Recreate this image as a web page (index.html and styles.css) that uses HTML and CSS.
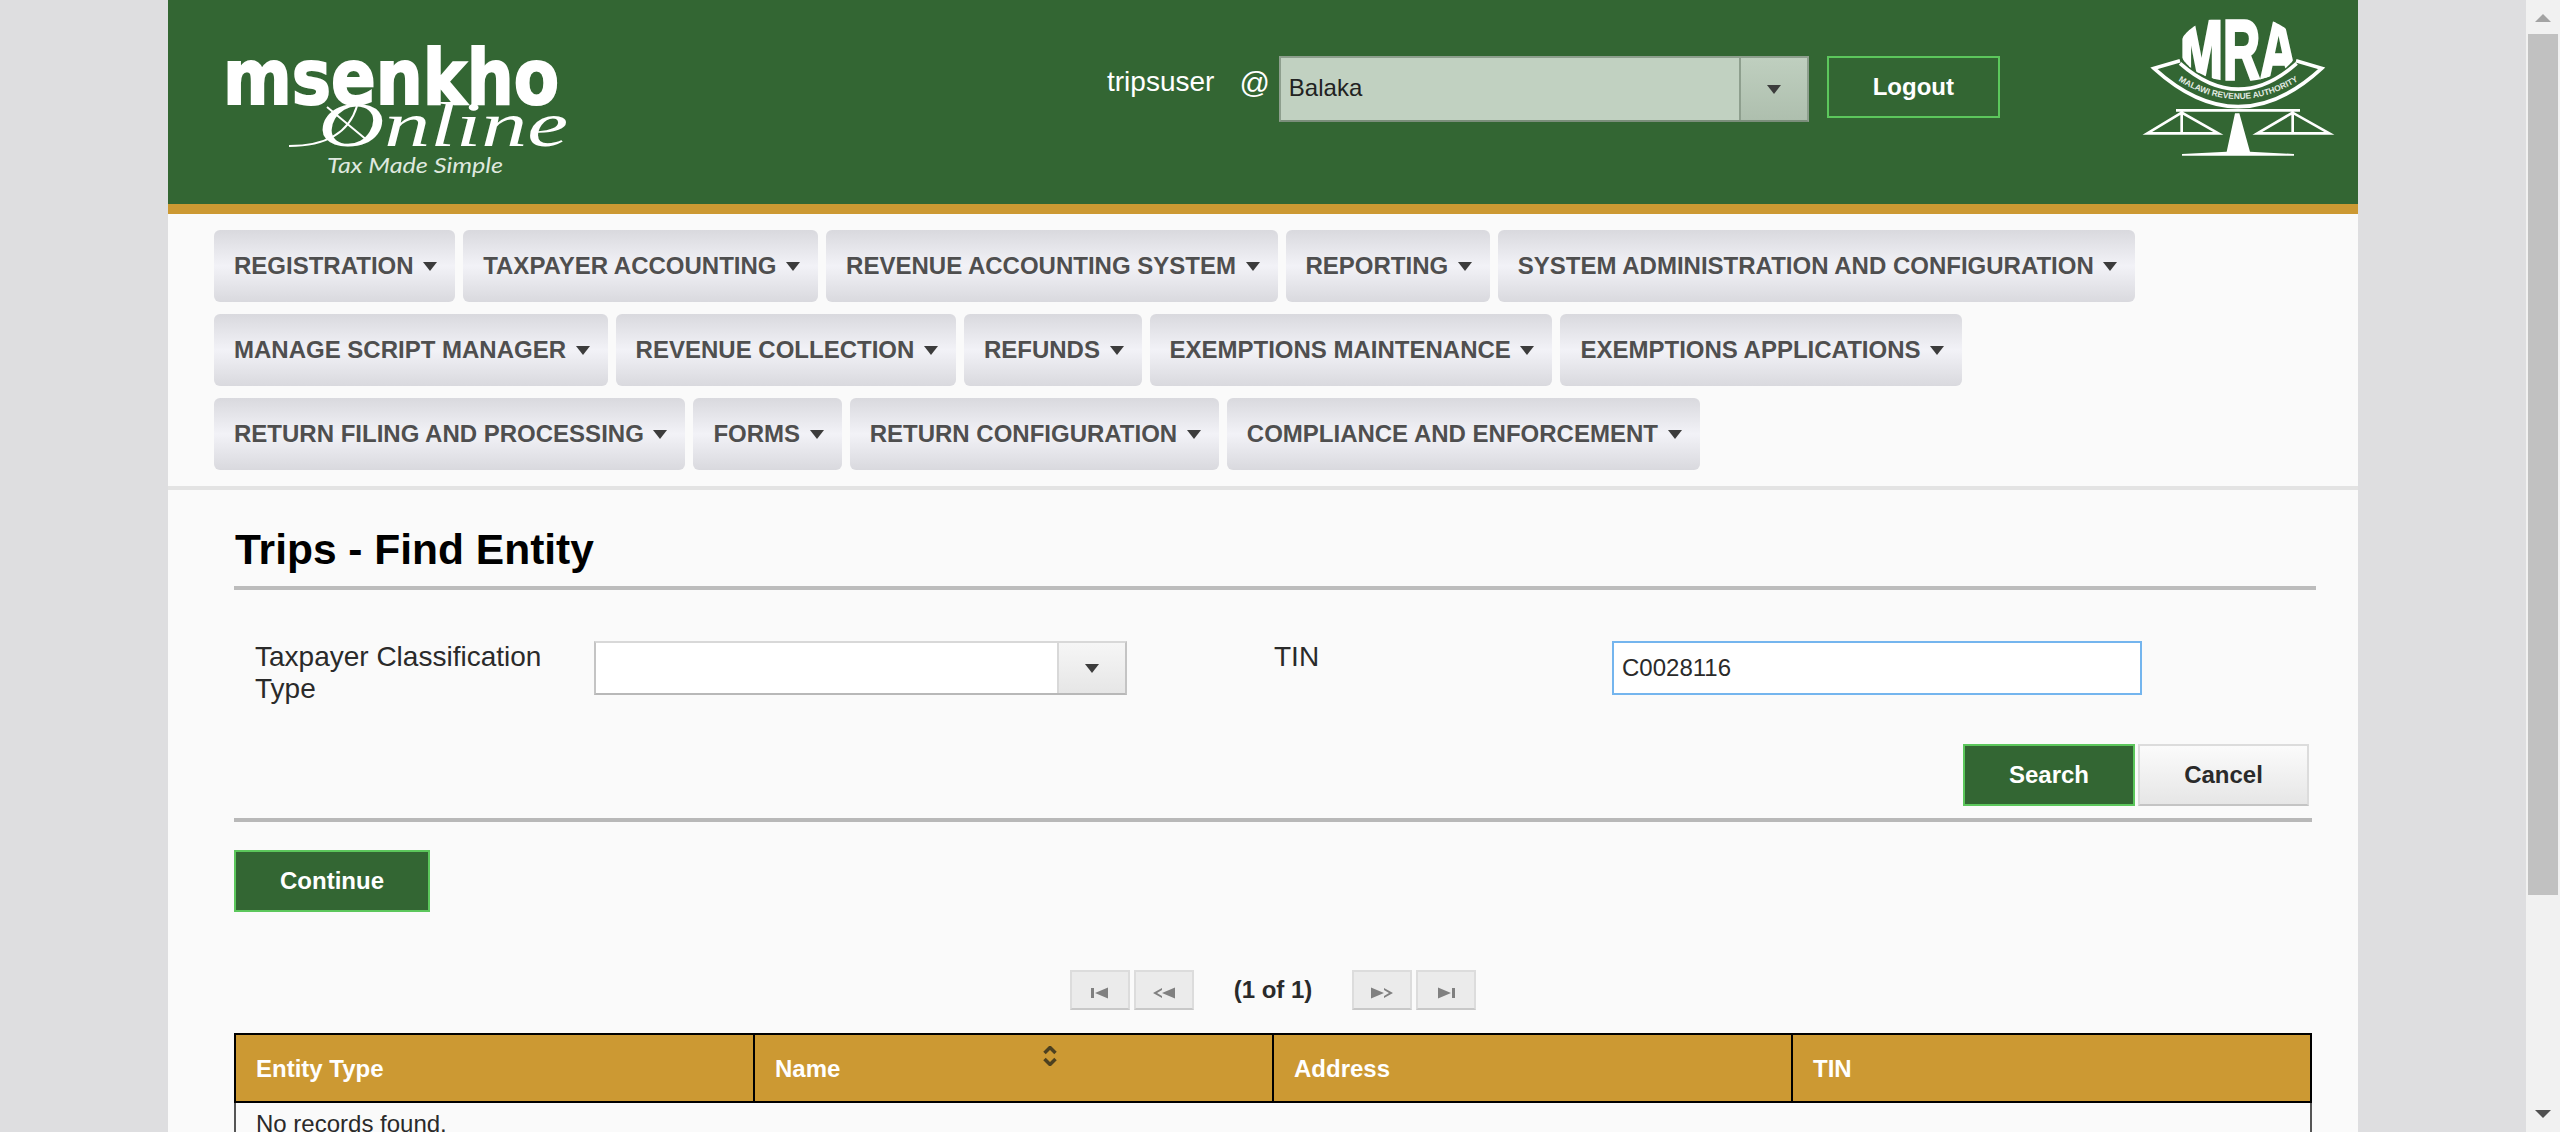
FILE: index.html
```html
<!DOCTYPE html>
<html lang="en">
<head>
  <meta charset="UTF-8" />
  <title>Trips - Find Entity</title>
  <link rel="stylesheet" href="styles.css">
</head>
<body>
  <div class="page">
    <div class="main">
      <header class="header">
        <svg class="logo" viewBox="0 0 400 204" width="400" height="204">
          <text class="logo-name" x="3" y="104" textLength="336" lengthAdjust="spacingAndGlyphs">msenkho</text>
          <text class="logo-online" x="98" y="146" textLength="250" lengthAdjust="spacingAndGlyphs">Online</text>
          <path class="logo-swash" d="M69 146 Q125 146 137 106 M107 107 L148 141" />
          <text class="logo-tag" x="107" y="173" textLength="176" lengthAdjust="spacingAndGlyphs">Tax Made Simple</text>
        </svg>
        <div class="user">
          <span class="user-name">tripsuser</span>
          <span class="user-at">@</span>
          <div class="combo combo-station">
            <span class="combo-label">Balaka</span>
            <span class="combo-btn"><i class="caret"></i></span>
          </div>
          <button class="btn btn-logout">Logout</button>
        </div>
        <svg class="mra" viewBox="0 0 774 480" width="258" height="160">
          <defs>
            <clipPath id="oval"><ellipse cx="415" cy="145" rx="176" ry="100" /></clipPath>
            <path id="bandText" d="M205 222 Q415 372 625 222" />
          </defs>
          <text class="mra-letters" x="240" y="236" textLength="352" lengthAdjust="spacingAndGlyphs" clip-path="url(#oval)">MRA</text>
          <path class="mra-line" d="M240 182 L162 205 Q415 435 665 205 L588 182" />
          <path class="mra-line" d="M240 190 Q415 345 590 190" />
          <text class="mra-band"><textPath href="#bandText" startOffset="50%" text-anchor="middle">MALAWI REVENUE AUTHORITY</textPath></text>
          <path class="mra-thin" d="M228 331 H600 M245 338 L142 400 H355 Z M245 338 V400 M578 338 L472 400 H688 Z M578 338 V400" />
          <path class="mra-fill" d="M405 340 H418 L450 455 L582 462 V467 H246 V462 L380 455 Z" />
        </svg>
      </header>

      <nav class="menu">
        <a class="menu-item">REGISTRATION <i class="caret"></i></a>
        <a class="menu-item">TAXPAYER ACCOUNTING <i class="caret"></i></a>
        <a class="menu-item">REVENUE ACCOUNTING SYSTEM <i class="caret"></i></a>
        <a class="menu-item">REPORTING <i class="caret"></i></a>
        <a class="menu-item">SYSTEM ADMINISTRATION AND CONFIGURATION <i class="caret"></i></a>
        <a class="menu-item">MANAGE SCRIPT MANAGER <i class="caret"></i></a>
        <a class="menu-item">REVENUE COLLECTION <i class="caret"></i></a>
        <a class="menu-item">REFUNDS <i class="caret"></i></a>
        <a class="menu-item">EXEMPTIONS MAINTENANCE <i class="caret"></i></a>
        <a class="menu-item">EXEMPTIONS APPLICATIONS <i class="caret"></i></a>
        <a class="menu-item">RETURN FILING AND PROCESSING <i class="caret"></i></a>
        <a class="menu-item">FORMS <i class="caret"></i></a>
        <a class="menu-item">RETURN CONFIGURATION <i class="caret"></i></a>
        <a class="menu-item">COMPLIANCE AND ENFORCEMENT <i class="caret"></i></a>
      </nav>

      <section class="content">
        <h1 class="title">Trips - Find Entity</h1>

        <div class="form-row">
          <label class="field-label">Taxpayer Classification Type</label>
          <div class="combo combo-type">
            <span class="combo-label"></span>
            <span class="combo-btn"><i class="caret"></i></span>
          </div>
          <label class="field-label field-label-tin">TIN</label>
          <input class="tin-input" type="text" value="C0028116" />
        </div>

        <div class="form-actions">
          <button class="btn btn-green btn-search">Search</button>
          <button class="btn btn-grey">Cancel</button>
        </div>

        <div class="continue-row">
          <button class="btn btn-green btn-continue">Continue</button>
        </div>

        <div class="pager">
          <span class="page-btn"><svg viewBox="0 0 18 12" width="18" height="12"><path d="M0 1H3V11H0ZM4 6L17 .5V11.5Z" /></svg></span>
          <span class="page-btn"><svg viewBox="0 0 22 12" width="22" height="12"><path d="M0 6L9 1V3L4 6L9 9V11ZM9 6L22 .5V11.5Z" /></svg></span>
          <span class="page-text">(1 of 1)</span>
          <span class="page-btn"><svg viewBox="0 0 22 12" width="22" height="12"><path d="M0 .5L13 6L0 11.5ZM13 1L22 6L13 11V9L18 6L13 3Z" /></svg></span>
          <span class="page-btn"><svg viewBox="0 0 18 12" width="18" height="12"><path d="M1 .5L14 6L1 11.5ZM15 1H18V11H15Z" /></svg></span>
        </div>

        <table class="results">
          <thead>
            <tr>
              <th>Entity Type</th>
              <th class="sortable">Name
                <svg class="sort-icon" viewBox="0 0 14 20" width="14" height="20"><path d="M1.500 7L7 1.500L12.500 7M1.500 13L7 18.500L12.500 13" /></svg>
              </th>
              <th>Address</th>
              <th>TIN</th>
            </tr>
          </thead>
          <tbody>
            <tr><td colspan="4">No records found.</td></tr>
          </tbody>
        </table>
      </section>
    </div>
  </div>

  <div class="scrollbar">
    <i class="scroll-arrow scroll-up"></i>
    <div class="scroll-track"><div class="scroll-thumb"></div></div>
    <i class="scroll-arrow scroll-down"></i>
  </div>
</body>
</html>
```

FILE: styles.css
```css
* {
  box-sizing: border-box;
  font-family: "Liberation Sans", Arial, sans-serif;
}

html,
body {
  height: 100%;
}

body {
  margin: 0;
  display: flex;
  overflow: hidden;
  background: #dedee0;
}

.page {
  flex: 1;
  height: 100vh;
  overflow: hidden;
  padding-left: 168px;
}

.main {
  width: 2190px;
  min-height: 100%;
  background: #fafafa;
}

/* header */
.header {
  height: 214px;
  display: flex;
  background: #336633;
  border-bottom: 10px solid #cc9933;
}

.logo {
  margin-left: 52px;
  flex: none;
}

.logo-name {
  font-family: "DejaVu Sans", sans-serif;
  font-weight: 700;
  font-size: 76px;
  fill: #fff;
  stroke: #fff;
  stroke-width: 2;
}

.logo-online {
  font-family: "Liberation Serif", serif;
  font-style: italic;
  font-size: 64px;
  fill: #fff;
}

.logo-swash {
  fill: none;
  stroke: #fff;
  stroke-width: 2;
}

.logo-tag {
  font-family: Lato, sans-serif;
  font-style: italic;
  font-size: 22px;
  fill: #dfe8df;
}

.user {
  display: flex;
  align-items: flex-start;
  flex: none;
  width: 893px;
  margin-left: 487px;
  padding-top: 56px;
  color: #fff;
  font-size: 28px;
}

.user-name {
  margin: 10px 25px 0 0;
}

.user-at {
  margin: 10px 9px 0 0;
  font-size: 30px;
}

.mra {
  flex: none;
  margin-left: auto;
}

.mra-letters {
  font-weight: 700;
  font-size: 250px;
  fill: #fff;
  stroke: #fff;
  stroke-width: 10;
}

.mra-line {
  fill: none;
  stroke: #fff;
  stroke-width: 11;
}

.mra-band {
  font-size: 25px;
  font-weight: 700;
  fill: #e4ece4;
}

.mra-thin {
  fill: none;
  stroke: #fff;
  stroke-width: 8;
}

.mra-fill {
  fill: #fff;
}

/* combos */
.combo {
  display: flex;
  flex: none;
  height: 54px;
  background: #fff;
  border: 2px solid #c4c4c4;
  border-top-color: #d8d8d8;
  border-bottom-color: #b8b8b8;
  font-size: 24px;
  color: #222;
}

.combo-label {
  flex: 1;
  padding: 8px 8px 0;
}

.combo-btn {
  width: 68px;
  display: flex;
  align-items: center;
  justify-content: center;
  border-left: 2px solid #d8d8d8;
  background: linear-gradient(#f6f6f6, #e6e6e6);
}

.combo-station {
  width: 530px;
  height: 66px;
  background: #c1d1c1;
  border-color: #8e9f8e;
  border-bottom-color: #7b8e7b;
}

.combo-station .combo-label {
  padding: 16px 8px 0;
}

.combo-station .combo-btn {
  border-left-color: #8e9f8e;
  background: linear-gradient(#bfcfbf, #aebfae);
}

.combo-type {
  width: 533px;
}

.caret {
  display: inline-block;
  width: 0;
  height: 0;
  border-left: 7px solid transparent;
  border-right: 7px solid transparent;
  border-top: 9px solid #3c3c3c;
}

/* buttons */
.btn {
  font-size: 24px;
  font-weight: 700;
  border: 2px solid #5cc75c;
  background: #336633;
  color: #fff;
  height: 62px;
  padding: 0;
}

.btn-logout {
  width: 173px;
  margin-left: 18px;
}

.btn-search {
  width: 172px;
}

.btn-grey {
  width: 171px;
  color: #2a2a2a;
  border-color: #dcdcdc;
  border-bottom-color: #c4c4c4;
  background: linear-gradient(#fbfbfb, #e6e6e6);
}

.btn-continue {
  width: 196px;
}

/* menu */
.menu {
  display: flex;
  flex-wrap: wrap;
  gap: 12px 8px;
  padding: 16px 46px;
  border-bottom: 4px solid #e3e3e3;
}

.menu-item {
  display: flex;
  align-items: center;
  gap: 9.6px;
  height: 72px;
  padding: 0 18px 0 20px;
  border-radius: 6px;
  font-size: 24px;
  font-weight: 700;
  color: #4f4f4f;
  background: linear-gradient(#d9d9de, #f2f2f7 50%, #d9d9de);
}

/* content */
.content {
  padding: 0 46px 0 66px;
}

.title {
  margin: 0 -4px 0 0;
  height: 100px;
  padding: 36px 0 0 1px;
  font-size: 42.5px;
  line-height: 48px;
  color: #000;
  border-bottom: 4px solid;
  border-image: linear-gradient(#d4d4d4 50%, #bcbcbc 50%) 1;
}

.form-row {
  display: flex;
  align-items: flex-start;
  padding: 51px 0 0 21px;
}

.field-label {
  width: 339px;
  flex: none;
  font-size: 28px;
  line-height: 32px;
  color: #2a2a2a;
  padding-right: 40px;
}

.field-label-tin {
  width: 338px;
  margin-left: 147px;
}

.tin-input {
  width: 530px;
  height: 54px;
  padding: 0 8px;
  border: 2px solid #74b5ee;
  font-size: 24px;
  color: #2a2a2a;
  background: #fff;
  outline: none;
}

.form-actions {
  display: flex;
  justify-content: flex-end;
  gap: 3px;
  padding: 39px 3px 12px 0;
  border-bottom: 4px solid;
  border-image: linear-gradient(#dcdcdc 50%, #b8b8b8 50%) 1;
}

.continue-row {
  padding-top: 28px;
}

.pager {
  display: flex;
  justify-content: center;
  align-items: center;
  gap: 4px;
  padding-top: 58px;
}

.page-btn {
  width: 60px;
  height: 40px;
  display: flex;
  align-items: center;
  justify-content: center;
  padding-top: 5px;
  background: #ebebeb;
  border: 2px solid #dcdcdc;
  border-bottom-color: #c8c8c8;
}

.page-btn svg {
  fill: #808080;
}

.page-text {
  width: 150px;
  text-align: center;
  font-size: 24px;
  font-weight: 700;
  color: #2a2a2a;
}

.results {
  width: 2078px;
  margin-top: 23px;
  table-layout: fixed;
  border-collapse: collapse;
}

.results th {
  height: 68px;
  padding: 2px 20px 0;
  text-align: left;
  font-size: 24px;
  font-weight: 700;
  color: #fff;
  background: #cc9933;
  border: 2px solid #000;
}

.results td {
  height: 60px;
  padding: 7px 20px;
  vertical-align: top;
  font-size: 24px;
  color: #2a2a2a;
  border: 2px solid #555;
  border-top: 0;
}

.sortable {
  position: relative;
}

.sort-icon {
  position: absolute;
  top: 11px;
  right: 215px;
  fill: none;
  stroke: #4c4020;
  stroke-width: 3.5;
}

/* scrollbar */
.scrollbar {
  flex: none;
  width: 34px;
  height: 100vh;
  display: flex;
  flex-direction: column;
  align-items: center;
  background: #f1f1f1;
}

.scroll-arrow {
  flex: none;
  width: 0;
  height: 0;
  border-left: 8px solid transparent;
  border-right: 8px solid transparent;
}

.scroll-up {
  margin: 14px 0 12px;
  border-bottom: 8px solid #a3a3a3;
}

.scroll-down {
  margin: 12px 0 14px;
  border-top: 8px solid #505050;
}

.scroll-track {
  flex: 1;
  width: 30px;
}

.scroll-thumb {
  height: 861px;
  background: #c1c1c1;
}
```
